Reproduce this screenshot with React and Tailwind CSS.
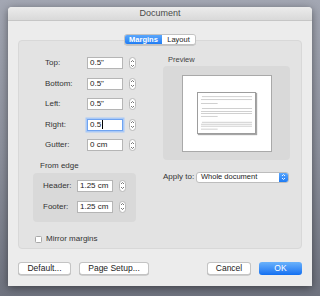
import React from "react";

const font = { fontFamily: '"Liberation Sans", Arial, sans-serif' };

const Stepper = ({ className = "" }) => (
  <div
    className={
      "flex h-[12px] w-[7px] flex-col items-center justify-center rounded-[4px] border border-[#b9b9b9] bg-white " +
      className
    }
  >
    <svg width="5" height="9" viewBox="0 0 5 9">
      <path d="M1 3 L2.5 1.5 L4 3" fill="none" stroke="#555" strokeWidth="0.8" />
      <path d="M1 6 L2.5 7.5 L4 6" fill="none" stroke="#555" strokeWidth="0.8" />
    </svg>
  </div>
);

const Field = ({ value, focused, width = "w-[36px]" }) => (
  <div
    className={
      "flex h-[12px] items-center bg-white pl-[2px] text-[8px] text-[#222] " +
      width +
      (focused
        ? " border border-[#6fa3f0] shadow-[0_0_0_1.5px_#a9c9f7]"
        : " border border-[#b5b5b5]")
    }
  >
    {value}
    {focused && <span className="ml-[0.5px] h-[9px] w-[1px] bg-black" />}
  </div>
);

const MarginRow = ({ label, value, focused }) => (
  <div className="flex h-[12px] items-center">
    <span className="w-[42px] text-[8px] text-[#333]">{label}</span>
    <Field value={value} focused={focused} />
    <Stepper className="ml-[6px]" />
  </div>
);

const EdgeRow = ({ label, value }) => (
  <div className="flex h-[13px] items-center">
    <span className="w-[34px] text-[8px] text-[#333]">{label}</span>
    <Field value={value} width="w-[36px]" />
    <Stepper className="ml-[6px]" />
  </div>
);

const Btn = ({ children, className = "" }) => (
  <div
    className={
      "flex h-[13px] items-center justify-center rounded-[3px] border border-[#c4c4c4] bg-white text-[8.5px] text-[#222] shadow-[0_0.5px_0_#b0b0b0] " +
      className
    }
  >
    {children}
  </div>
);

const DocLines = () => {
  const lines = [
    [3, 1, 51],
    [6, 0, 52],
    [10, 0, 17],
    [15, 1, 51],
    [18, 0, 52],
    [20, 0, 52],
    [23, 0, 17],
    [29, 1, 51],
    [31, 0, 52],
    [33, 0, 52],
    [36, 0, 17],
  ];
  return (
    <svg width="58" height="41" viewBox="0 0 58 41">
      {lines.map(([y, x, w], i) => (
        <rect key={i} x={3 + x} y={y} width={w} height="0.8" fill="#c4c4c4" />
      ))}
    </svg>
  );
};

export default function App() {
  return (
    <div
      style={font}
      className="h-[296px] w-[320px] overflow-hidden bg-gradient-to-b from-[#a3a7b3] via-[#8d919d] to-[#6f737f] pl-[8px] pt-[7px]"
    >
      <div className="flex h-[279px] w-[304px] flex-col rounded-t-[4px] bg-[#ececec] shadow-[0_2px_8px_rgba(0,0,0,0.45)]">
        {/* title bar */}
        <div className="flex h-[14px] items-center justify-center rounded-t-[4px] border-b border-[#c6c6c6] bg-gradient-to-b from-[#ececec] to-[#d9d9d9] text-[9px] text-[#4a4a4a]">
          Document
        </div>

        <div className="flex flex-1 flex-col px-[10px]">
          {/* tabs */}
          <div className="relative z-10 -mb-[5px] mt-[13px] flex justify-center">
            <div className="flex h-[11px] overflow-hidden rounded-[3px] border border-[#c2c2c2] text-[7.5px] shadow-[0_0.5px_0_#aaa]">
              <div className="flex w-[37px] items-center justify-center bg-gradient-to-b from-[#5aa6fb] to-[#1e7cf4] font-bold text-white">
                Margins
              </div>
              <div className="flex w-[33px] items-center justify-center bg-white text-[#222]">
                Layout
              </div>
            </div>
          </div>

          {/* group box */}
          <div className="flex h-[209px] rounded-[4px] border border-[#d8d8d8] bg-[#e3e3e3]">
            {/* left column */}
            <div className="flex w-[144px] flex-col pl-[14px] pt-[16px]">
              <div className="flex flex-col gap-[8.5px] pl-[12px]">
                <MarginRow label="Top:" value={'0.5"'} />
                <MarginRow label="Bottom:" value={'0.5"'} />
                <MarginRow label="Left:" value={'0.5"'} />
                <MarginRow label="Right:" value="0.5" focused />
                <MarginRow label="Gutter:" value="0 cm" />
              </div>

              <div className="mt-[9px] pl-[7px] text-[8px] leading-[11px] text-[#333]">
                From edge
              </div>
              <div className="mt-[2px] flex h-[49px] w-[103px] flex-col gap-[8px] rounded-[4px] bg-[#d9d9d9] pl-[10px] pt-[6px]">
                <EdgeRow label="Header:" value="1.25 cm" />
                <EdgeRow label="Footer:" value="1.25 cm" />
              </div>

              <div className="mt-[11px] flex items-center pl-[2px]">
                <div className="h-[7px] w-[7px] rounded-[1.5px] border border-[#a8a8a8] bg-white" />
                <span className="ml-[4px] text-[8px] text-[#333]">Mirror margins</span>
              </div>
            </div>

            {/* right column */}
            <div className="flex flex-col pl-[-1px] pt-[14px]">
              <div className="pl-[5px] text-[7.5px] leading-[10px] text-[#444]">Preview</div>
              <div className="mt-[1px] flex h-[94px] w-[127px] items-center justify-center rounded-[4px] bg-[#d9d9d9]">
                <div className="flex h-[77px] w-[90px] items-center justify-center border border-[#a9a9a9] bg-white">
                  <div className="flex h-[42px] w-[59px] border border-[#9d9d9d] bg-white shadow-[1px_1px_1px_rgba(0,0,0,0.35)]">
                    <DocLines />
                  </div>
                </div>
              </div>

              <div className="mt-[11px] flex items-center">
                <span className="w-[33px] text-[8px] text-[#333]">Apply to:</span>
                <div className="flex h-[11px] w-[93px] items-center overflow-hidden rounded-[3px] border border-[#bdbdbd] bg-white">
                  <span className="flex-1 pl-[4px] text-[7.5px] text-[#222]">Whole document</span>
                  <div className="flex h-full w-[9px] items-center justify-center bg-gradient-to-b from-[#5aa6fb] to-[#1e7cf4]">
                    <svg width="5" height="8" viewBox="0 0 5 8">
                      <path d="M1 3 L2.5 1.5 L4 3" fill="none" stroke="#fff" strokeWidth="0.9" />
                      <path d="M1 5 L2.5 6.5 L4 5" fill="none" stroke="#fff" strokeWidth="0.9" />
                    </svg>
                  </div>
                </div>
              </div>
            </div>
          </div>

          {/* buttons */}
          <div className="mt-[13px] flex items-center">
            <Btn className="w-[53px]">Default...</Btn>
            <Btn className="ml-[8px] w-[70px]">Page Setup...</Btn>
            <Btn className="ml-auto w-[44px]">Cancel</Btn>
            <div className="ml-[8px] flex h-[13px] w-[43px] items-center justify-center rounded-[3px] bg-gradient-to-b from-[#6ab2fb] to-[#0f6ff1] text-[8.5px] text-white">
              OK
            </div>
          </div>
        </div>
      </div>
    </div>
  );
}
